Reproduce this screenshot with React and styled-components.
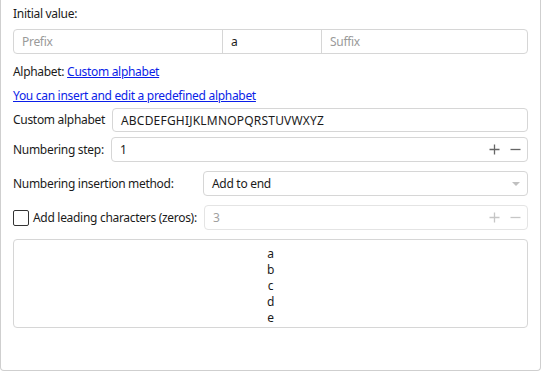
import React from "react";
import styled, { createGlobalStyle } from "styled-components";

const GlobalStyle = createGlobalStyle`
  html, body {
    margin: 0;
    padding: 0;
    background: #ffffff;
  }
  body {
    font-family: "Noto Sans", "Segoe UI", sans-serif;
    font-size: 12px;
    letter-spacing: -0.3px;
    color: #1b1b1b;
  }
`;

const Panel = styled.div`
  box-sizing: border-box;
  width: 541px;
  height: 371px;
  border: 1px solid #cfcfcf;
  border-top: none;
  border-radius: 0 0 4px 4px;
  padding: 5px 12px 0 12px;
  display: flex;
  flex-direction: column;
`;

const Label = styled.div`
  height: 18px;
  line-height: 18px;
  white-space: nowrap;
  width: ${(p) => (p.$width ? `${p.$width}px` : "auto")};
  flex-shrink: 0;
  display: flex;
  align-items: center;
  gap: 4px;
`;

const Section = styled.div`
  margin-top: ${(p) => p.$top || 0}px;
`;

const Link = styled.a`
  color: #0a1ee8;
  text-decoration: underline;
  cursor: pointer;
`;

const Group = styled.div`
  box-sizing: border-box;
  height: 25px;
  border: 1px solid #d6d6d6;
  border-radius: 4px;
  display: grid;
  grid-template-columns: 208px 99px 1fr;
`;

const Cell = styled.div`
  display: flex;
  align-items: center;
  padding: 0 8px;
  color: ${(p) => (p.$placeholder ? "#9a9a9a" : "#1b1b1b")};
  border-left: ${(p) => (p.$first ? "none" : "1px solid #d6d6d6")};
`;

const Row = styled.div`
  display: flex;
  align-items: center;
  margin-top: ${(p) => p.$top || 0}px;
`;

const Field = styled.div`
  box-sizing: border-box;
  flex: 1;
  height: ${(p) => p.$h || 25}px;
  border: 1px solid ${(p) => (p.$disabled ? "#e4e4e4" : "#d6d6d6")};
  border-radius: 4px;
  display: flex;
  align-items: center;
  padding: 0 6px 0 8px;
  color: ${(p) => (p.$disabled ? "#a0a0a0" : "#1b1b1b")};
`;

const Value = styled.span`
  flex: 1;
  letter-spacing: ${(p) => (p.$ls !== undefined ? `${p.$ls}px` : "inherit")};
`;

const Spin = styled.div`
  display: flex;
  align-items: center;
  gap: 10px;
`;

const Checkbox = styled.div`
  box-sizing: border-box;
  width: 16px;
  height: 16px;
  border: 1px solid #333;
  border-radius: 2px;
  background: #fff;
`;

const ListBox = styled.div`
  box-sizing: border-box;
  margin-top: 9px;
  height: 89px;
  border: 1px solid #d6d6d6;
  border-radius: 4px;
  display: flex;
  flex-direction: column;
  align-items: center;
  padding-top: 6px;
`;

const ListItem = styled.div`
  height: 16px;
  line-height: 16px;
`;

const Plus = ({ color }) => (
  <svg width="11" height="11" viewBox="0 0 11 11">
    <path d="M5.5 0.5v10M0.5 5.5h10" stroke={color} strokeWidth="1.3" />
  </svg>
);

const Minus = ({ color }) => (
  <svg width="11" height="11" viewBox="0 0 11 11">
    <path d="M0.5 5.5h10" stroke={color} strokeWidth="1.3" />
  </svg>
);

const Caret = () => (
  <svg width="10" height="6" viewBox="0 0 10 6">
    <path d="M1 1h8L5 5z" fill="#c0c0c0" />
  </svg>
);

export default function App() {
  return (
    <>
      <GlobalStyle />
      <Panel>
        <Label>Initial value:</Label>
        <Section $top={6}>
          <Group>
            <Cell $first $placeholder>Prefix</Cell>
            <Cell>a</Cell>
            <Cell $placeholder>Suffix</Cell>
          </Group>
        </Section>
        <Section $top={9}>
          <Label>
            <span>
              Alphabet: <Link>Custom alphabet</Link>
            </span>
          </Label>
        </Section>
        <Section $top={6}>
          <Label>
            <Link>You can insert and edit a predefined alphabet</Link>
          </Label>
        </Section>
        <Row $top={3}>
          <Label $width={99}>Custom alphabet</Label>
          <Field $h={24}>
            <Value $ls={0.2}>ABCDEFGHIJKLMNOPQRSTUVWXYZ</Value>
          </Field>
        </Row>
        <Row $top={5}>
          <Label $width={98}>Numbering step:</Label>
          <Field>
            <Value>1</Value>
            <Spin>
              <Plus color="#666" />
              <Minus color="#666" />
            </Spin>
          </Field>
        </Row>
        <Row $top={9}>
          <Label $width={190}>Numbering insertion method:</Label>
          <Field>
            <Value>Add to end</Value>
            <Caret />
          </Field>
        </Row>
        <Row $top={9}>
          <Label $width={191}>
            <Checkbox />
            Add leading characters (zeros):
          </Label>
          <Field $disabled>
            <Value>3</Value>
            <Spin>
              <Plus color="#c6c6c6" />
              <Minus color="#c6c6c6" />
            </Spin>
          </Field>
        </Row>
        <ListBox>
          {["a", "b", "c", "d", "e"].map((l) => (
            <ListItem key={l}>{l}</ListItem>
          ))}
        </ListBox>
      </Panel>
    </>
  );
}
